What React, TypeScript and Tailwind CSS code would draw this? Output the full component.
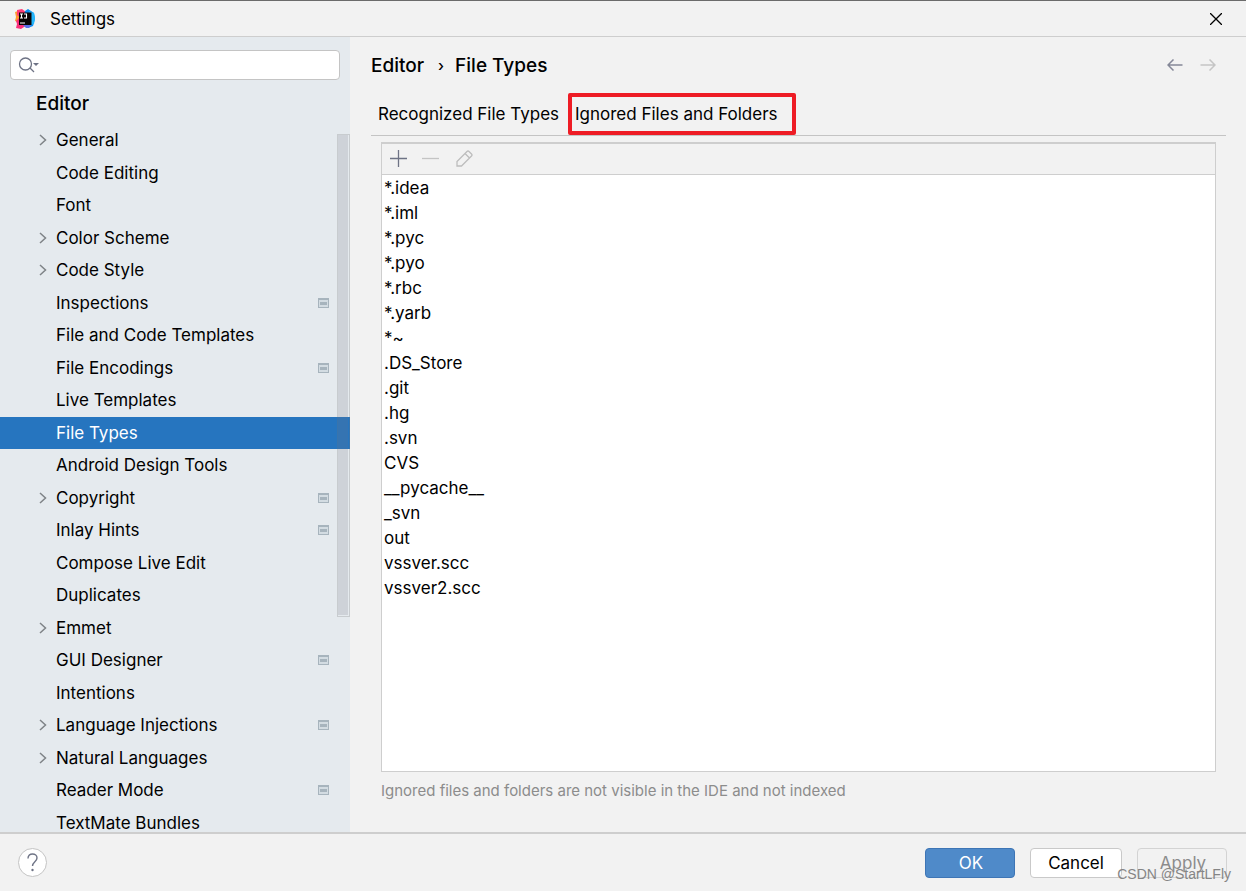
// App.tsx
import React, { useState } from "react";

interface TreeItem {
    name: string;
    expandable?: boolean;
    projectLevel?: boolean;
}

const treeItems: TreeItem[] = [
    { name: "General", expandable: true },
    { name: "Code Editing" },
    { name: "Font" },
    { name: "Color Scheme", expandable: true },
    { name: "Code Style", expandable: true },
    { name: "Inspections", projectLevel: true },
    { name: "File and Code Templates" },
    { name: "File Encodings", projectLevel: true },
    { name: "Live Templates" },
    { name: "File Types" },
    { name: "Android Design Tools" },
    { name: "Copyright", expandable: true, projectLevel: true },
    { name: "Inlay Hints", projectLevel: true },
    { name: "Compose Live Edit" },
    { name: "Duplicates" },
    { name: "Emmet", expandable: true },
    { name: "GUI Designer", projectLevel: true },
    { name: "Intentions" },
    { name: "Language Injections", expandable: true, projectLevel: true },
    { name: "Natural Languages", expandable: true },
    { name: "Reader Mode", projectLevel: true },
    { name: "TextMate Bundles" },
];

const ignoredPatterns = [
    "*.idea", "*.iml", "*.pyc", "*.pyo", "*.rbc", "*.yarb", "*~", ".DS_Store",
    ".git", ".hg", ".svn", "CVS", "__pycache__", "_svn", "out", "vssver.scc", "vssver2.scc",
];

const AppLogo = () => (
    <svg width="20" height="20" viewBox="0 0 20 20" aria-hidden="true">
        <path d="M0 3 3 2 5 7 3 13 0 12l1-4z" fill="#ff9a2e" />
        <path d="M2 1 7 0l4 3-5 6-4-3z" fill="#ff3c78" />
        <path d="M10 2 13 0l6 4 1 6-2 7-5 2-5-4z" fill="#0a8df0" />
        <path d="M14 2 19 4l1 5-1 6-3 1z" fill="#22b5fa" />
        <path d="M1 12 4 9l8 7-6 4-5-1 1-4z" fill="#fb2f7b" />
        <path d="m8 16 8 0-2 3-3 0z" fill="#5b6fe8" />
        <path d="M4 3.500h12.500V16H4z" fill="#080304" />
        <path d="M5 5h3M6.500 5v4M5 9h3M9 5h2.500v4H9M5 14h5" fill="none" stroke="#fff" strokeWidth="1.100" />
    </svg>
);

const ChevronIcon = () => (
    <svg width="8" height="12" viewBox="0 0 8 12" fill="none" stroke="#7f8387" strokeWidth="1.500" aria-hidden="true">
        <path d="m1 1 5.500 5L1 11" />
    </svg>
);

const ProjectIcon = () => (
    <svg width="11" height="10" viewBox="0 0 11 10" shapeRendering="crispEdges" aria-hidden="true">
        <path d="M0 0h11v10H0z" fill="#a7b4bd" />
        <path d="M1 2h9v7H1z" fill="#d3dce2" />
        <path d="M2 4h7v3H2z" fill="#a7b4bd" />
    </svg>
);

const SearchIcon = () => (
    <svg width="22" height="16" viewBox="0 0 22 16" fill="none" stroke="#6e7385" strokeWidth="1.300" aria-hidden="true">
        <circle cx="7.500" cy="7" r="6" />
        <path d="m12 11 4 4" />
        <path d="M15 6h6l-3 3z" fill="#6e7385" stroke="none" />
    </svg>
);

const TreeRow: React.FC<{ item: TreeItem; selected: boolean; onSelect: () => void }> = ({ item, selected, onSelect }) => {
    return (
        <li className="flex">
            <button
                onClick={onSelect}
                className={`flex flex-1 items-center pr-[21px] pl-[39px] text-left leading-[25px] ${selected ? "bg-[#2675bf] text-white" : ""}`}
            >
                <span className="w-[17px]">{item.expandable && <ChevronIcon />}</span>
                <span className="flex-1 pt-px">{item.name}</span>
                {item.projectLevel && <ProjectIcon />}
            </button>
        </li>
    );
};

const Sidebar: React.FC = () => {
    const [selected, setSelected] = useState("File Types");

    return (
        <aside className="flex w-[350px] shrink-0 flex-col overflow-hidden bg-[#e5eaee]">
            <label className="mx-[10px] mt-[13px] flex h-[30px] shrink-0 items-center rounded-[4px] border border-[#c4c4c4] bg-white pl-[7px]">
                <SearchIcon />
                <input type="text" aria-label="Search settings" className="min-w-0 flex-1 px-1 outline-none" />
            </label>
            <h2 className="flex h-[44px] shrink-0 items-center pt-1 pl-9 text-[19px] font-medium">Editor</h2>
            <div className="relative shrink-0">
                <ul className="grid h-[715px] auto-rows-fr">
                    {treeItems.map((item) => (
                        <TreeRow
                            key={item.name}
                            item={item}
                            selected={item.name === selected}
                            onSelect={() => setSelected(item.name)}
                        />
                    ))}
                </ul>
                {/* scrollbar thumb */}
                <div className="absolute top-[10px] right-0 flex h-[483px] w-[13px] border border-[#737373]/25 pr-px pb-px">
                    <div className="flex-1 bg-[#737380]/20" />
                </div>
            </div>
        </aside>
    );
};

const FileTypesPage: React.FC = () => {
    return (
        <main className="flex min-w-0 flex-1 flex-col pr-5 pl-[21px]">
            <div className="flex h-[56px] items-center justify-between">
                <h1 className="flex items-center pt-[2px] text-[19px] font-medium">
                    Editor
                    <span className="w-[31px] pl-[3px] text-center text-[15px]">›</span>
                    File Types
                </h1>
                <div className="flex gap-[17px] pr-[10px]">
                    <button aria-label="Back">
                        <svg width="16" height="12" viewBox="0 0 16 12" fill="none" stroke="#858898" strokeWidth="1.500">
                            <path d="M15.500 6H1M6.500.5 1 6l5.500 5.500" />
                        </svg>
                    </button>
                    <button aria-label="Forward" disabled>
                        <svg width="16" height="12" viewBox="0 0 16 12" fill="none" stroke="#c5c5c5" strokeWidth="1.500">
                            <path d="M.5 6H15M9.500.5 15 6l-5.500 5.500" />
                        </svg>
                    </button>
                </div>
            </div>
            <div role="tablist" className="flex h-[43px] border-b border-[#c4c4c4]">
                <button role="tab" aria-selected="false" className="w-[197px] pt-[2px] pl-[7px] text-left whitespace-nowrap">
                    Recognized File Types
                </button>
                <button role="tab" aria-selected="true" className="w-[228px] rounded-[2px] border-4 border-[#ee1c25] pt-[2px] pl-[3px] text-left whitespace-nowrap">
                    Ignored Files and Folders
                </button>
            </div>
            <section className="mx-[10px] mt-[6px] flex min-h-0 flex-1 flex-col border border-t-2 border-[#cecece]">
                <div className="flex h-[31px] shrink-0 items-center gap-[15px] border-b border-[#cecece] pb-px pl-2">
                    <button aria-label="Add">
                        <svg width="17" height="17" viewBox="0 0 17 17" stroke="#6e7385" strokeWidth="1.300">
                            <path d="M8.500 0v17M0 8.500h17" />
                        </svg>
                    </button>
                    <button aria-label="Remove" disabled>
                        <svg width="17" height="17" viewBox="0 0 17 17" stroke="#c4c4c4" strokeWidth="1.300">
                            <path d="M0 8.500h17" />
                        </svg>
                    </button>
                    <button aria-label="Edit" disabled>
                        <svg width="19" height="17" viewBox="-2 0 19 17" fill="none" stroke="#bdbdbd" strokeWidth="1.300">
                            <path d="M1 16v-4.500L11 1.500q1-1 2 0L15.500 4q1 1 0 2L5.500 16zM9 3.500 13.500 8" />
                        </svg>
                    </button>
                </div>
                <ul className="flex-1 bg-white pt-px pl-[2px]">
                    {ignoredPatterns.map((pattern) => (
                        <li key={pattern} className="h-[25px] leading-[25px]">{pattern}</li>
                    ))}
                </ul>
            </section>
            <p className="mx-[10px] h-[60px] pt-2 text-[15px] leading-[22px] text-[#8c8c8c]">
                Ignored files and folders are not visible in the IDE and not indexed
            </p>
        </main>
    );
};

const Footer: React.FC = () => {
    return (
        <footer className="relative flex h-[59px] shrink-0 items-center border-t-2 border-[#cecece] pr-[19px] pl-[18px]">
            <button aria-label="Help" className="flex h-[29px] w-[29px] items-center justify-center rounded-full border border-[#c4c4c4] bg-white">
                <svg width="11" height="19" viewBox="0 0 11 19" fill="none" stroke="#6e7385" strokeWidth="1.400">
                    <path d="M1 5.500C1 2.500 3 1 5.500 1S10 2.500 10 5c0 3.500-4.500 4-4.500 8" />
                    <circle cx="5.500" cy="17" r="1.200" fill="#6e7385" stroke="none" />
                </svg>
            </button>
            <div className="ml-auto flex gap-[15px]">
                <button className="h-[30px] w-[90px] rounded-[4px] border border-[#3e75b5] bg-[#4f8ac9] pt-[2px] pl-[2px] text-white">OK</button>
                <button className="h-[30px] w-[92px] rounded-[4px] border border-[#c9c9c9] bg-white pt-[2px]">Cancel</button>
                <button disabled className="h-[30px] w-[90px] rounded-[4px] border border-[#d3d3d3] pt-[2px] pl-[2px] text-[#8c8c8c]">Apply</button>
            </div>
            <span className="absolute right-[15px] bottom-[7px] font-['Liberation_Sans'] text-[14px] leading-5 text-[#858585]">
                CSDN @StartLFly
            </span>
        </footer>
    );
};

const App: React.FC = () => {
    return (
        <div className="flex h-screen flex-col overflow-hidden bg-[#f2f2f2] font-['Inter',sans-serif] text-[17px] text-black">
            <header className="flex h-[37px] shrink-0 items-center border-t border-b border-t-[#6b6b6b] border-b-[#cecece] pr-6 pl-[15px]">
                <AppLogo />
                <span className="flex-1 pt-[2px] pl-[15px]">Settings</span>
                <button aria-label="Close">
                    <svg width="12" height="12" viewBox="0 0 12 12" stroke="#000" strokeWidth="1.300">
                        <path d="m0 0 12 12M12 0 0 12" />
                    </svg>
                </button>
            </header>
            <div className="flex min-h-0 flex-1">
                <Sidebar />
                <FileTypesPage />
            </div>
            <Footer />
        </div>
    );
};

export default App;
